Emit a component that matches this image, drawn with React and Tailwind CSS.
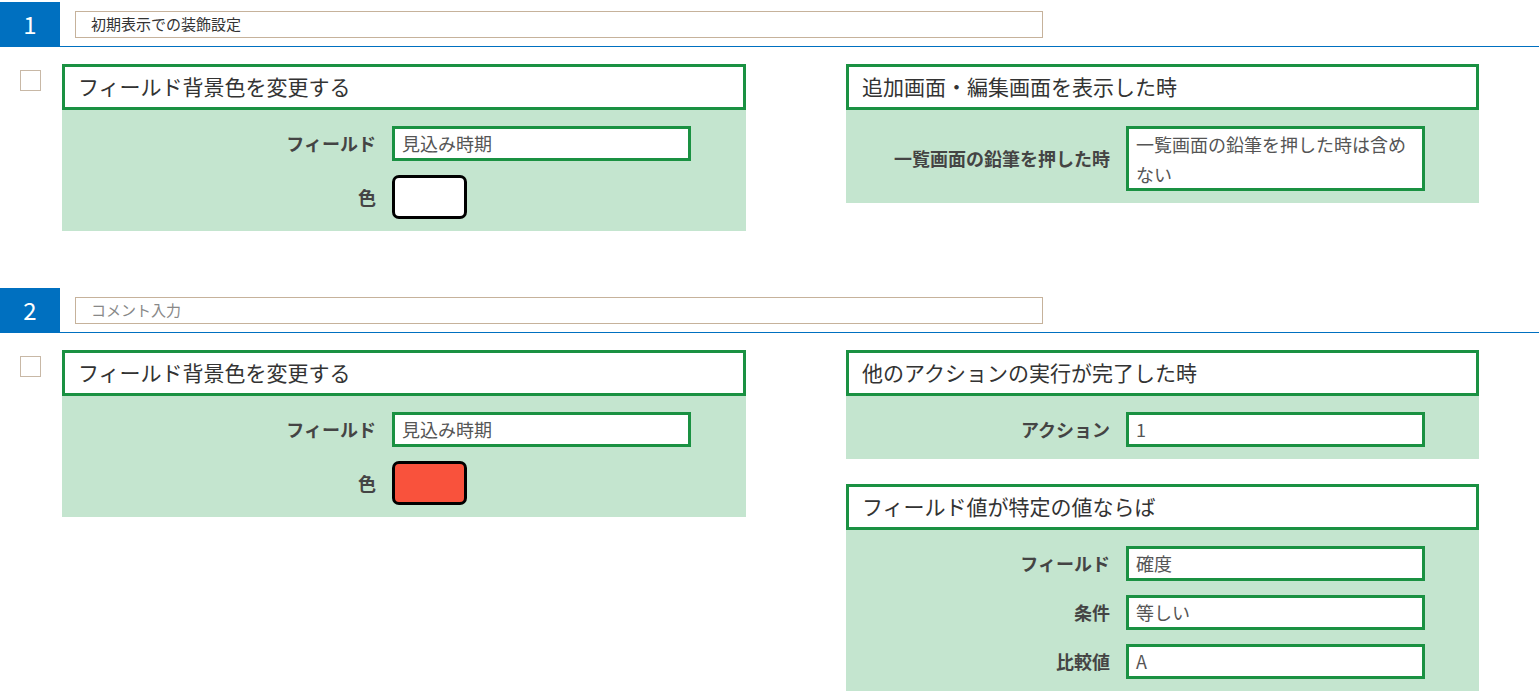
const FONT = { fontFamily: '"Noto Sans CJK JP", "Noto Sans", sans-serif' };

function SectionHeader({ num, comment, placeholder }) {
  return (
    <div className="flex items-start pt-[2px] border-b border-[#0070c0]">
      <div className="w-[60px] h-[44px] bg-[#0070c0] flex items-center justify-center text-white text-[24px] leading-none">
        {num}
      </div>
      <div className="ml-[15px] mt-[9px] w-[968px] h-[27px] border border-[#c6b29b] flex items-center pl-[15px] text-[15px]">
        {comment ? <span className="text-[#333]">{comment}</span> : <span className="text-[#888]">{placeholder}</span>}
      </div>
    </div>
  );
}

function Card({ title, children, className = '' }) {
  return (
    <div className={className}>
      <div className="h-[46px] border-[3px] border-[#1a9142] bg-white flex items-center pl-[13px] text-[21px] text-[#333]">
        {title}
      </div>
      <div className="bg-[#c4e5cf] pt-4 pb-3 flex flex-col gap-[14px]">{children}</div>
    </div>
  );
}

function Row({ label, labelWidth, children }) {
  return (
    <div className="flex items-center">
      <div className="text-right font-bold text-[18px] text-[#444] shrink-0" style={{ width: labelWidth }}>
        {label}
      </div>
      <div className="ml-4">{children}</div>
    </div>
  );
}

function Input({ value }) {
  return (
    <div className="w-[299px] h-[35px] border-[3px] border-[#1a9142] bg-white flex items-center pl-[7px] text-[18px] text-[#555]">
      {value}
    </div>
  );
}

function Swatch({ color }) {
  return <div className={`w-[75px] h-[44px] border-[3px] border-black rounded-[7px] ${color}`} />;
}

export default function App() {
  return (
    <div className="w-[1539px] bg-white" style={FONT}>
      <SectionHeader num="1" comment="初期表示での装飾設定" />
      <div className="flex pt-[17px] pl-5">
        <div className="w-[21px] h-[21px] border border-[#c8b8a6] mt-[6px]" />
        <Card title="フィールド背景色を変更する" className="ml-[21px] w-[684px]">
          <Row label="フィールド" labelWidth="314px">
            <Input value="見込み時期" />
          </Row>
          <Row label="色" labelWidth="314px">
            <Swatch color="bg-white" />
          </Row>
        </Card>
        <div className="ml-[100px] w-[633px]">
          <Card title="追加画面・編集画面を表示した時">
            <Row label="一覧画面の鉛筆を押した時" labelWidth="264px">
              <div className="w-[299px] h-[65px] border-[3px] border-[#1a9142] bg-white pl-[7px] text-[18px] leading-[30px] text-[#555]">
                一覧画面の鉛筆を押した時は含め
                <br />
                ない
              </div>
            </Row>
          </Card>
        </div>
      </div>

      <div className="h-[55px]" />
      <SectionHeader num="2" placeholder="コメント入力" />
      <div className="flex pt-[17px] pl-5 pb-2">
        <div className="w-[21px] h-[21px] border border-[#c8b8a6] mt-[6px]" />
        <div className="ml-[21px] w-[684px] self-start">
          <Card title="フィールド背景色を変更する">
            <Row label="フィールド" labelWidth="314px">
              <Input value="見込み時期" />
            </Row>
            <Row label="色" labelWidth="314px">
              <Swatch color="bg-[#f9523c]" />
            </Row>
          </Card>
        </div>
        <div className="ml-[100px] w-[633px] flex flex-col gap-[25px]">
          <Card title="他のアクションの実行が完了した時">
            <Row label="アクション" labelWidth="264px">
              <Input value="1" />
            </Row>
          </Card>
          <Card title="フィールド値が特定の値ならば">
            <Row label="フィールド" labelWidth="264px">
              <Input value="確度" />
            </Row>
            <Row label="条件" labelWidth="264px">
              <Input value="等しい" />
            </Row>
            <Row label="比較値" labelWidth="264px">
              <Input value="A" />
            </Row>
          </Card>
        </div>
      </div>
    </div>
  );
}
